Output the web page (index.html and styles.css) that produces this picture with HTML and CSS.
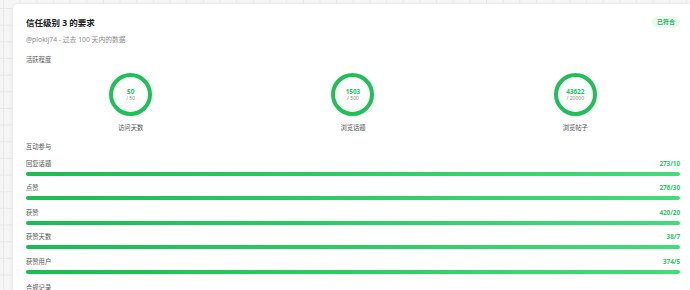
FILE: index.html
```html
<!DOCTYPE html>
<html lang="zh-CN">
<head>
  <meta charset="UTF-8" />
  <meta name="viewport" content="width=device-width, initial-scale=1.0"/>
  <title>信任级别 3 的要求</title>
  <link rel="stylesheet" href="styles.css">
</head>
<body>

  <div class="card">
    <div class="card-head">
      <h2 class="title">信任级别 3 的要求</h2>
      <span class="badge">已符合</span>
    </div>
    <div class="subtitle">@plokij74 - 过去 100 天内的数据</div>

    <div class="section-label">活跃程度</div>
    <div class="rings">
      <div class="ring-item">
        <div class="ring">
          <span class="ring-value">50</span>
          <span class="ring-goal">/ 50</span>
        </div>
        <div class="ring-label">访问天数</div>
      </div>
      <div class="ring-item">
        <div class="ring">
          <span class="ring-value">1503</span>
          <span class="ring-goal">/ 500</span>
        </div>
        <div class="ring-label">浏览话题</div>
      </div>
      <div class="ring-item">
        <div class="ring">
          <span class="ring-value">43622</span>
          <span class="ring-goal">/ 20000</span>
        </div>
        <div class="ring-label">浏览帖子</div>
      </div>
    </div>

    <div class="section-label gap-top">互动参与</div>
    <div class="rows">
      <div class="row">
        <div class="row-text"><span>回复话题</span><span class="row-value">273/10</span></div>
        <div class="bar"><div class="bar-fill" style="width: 100%"></div></div>
      </div>
      <div class="row">
        <div class="row-text"><span>点赞</span><span class="row-value">276/30</span></div>
        <div class="bar"><div class="bar-fill" style="width: 100%"></div></div>
      </div>
      <div class="row">
        <div class="row-text"><span>获赞</span><span class="row-value">420/20</span></div>
        <div class="bar"><div class="bar-fill" style="width: 100%"></div></div>
      </div>
      <div class="row">
        <div class="row-text"><span>获赞天数</span><span class="row-value">38/7</span></div>
        <div class="bar"><div class="bar-fill" style="width: 100%"></div></div>
      </div>
      <div class="row">
        <div class="row-text"><span>获赞用户</span><span class="row-value">374/5</span></div>
        <div class="bar"><div class="bar-fill" style="width: 100%"></div></div>
      </div>
    </div>

    <div class="section-label gap-top">合规记录</div>
  </div>

</body>
</html>
```

FILE: styles.css
```css
html, body {
  overflow: hidden;
}

body {
  margin: 0;
  padding: 4px 0 0 13px;
  font-family: "Noto Sans", "Noto Sans CJK SC", sans-serif;
  background-color: #f5f5f5;
  background-image:
    linear-gradient(to right, #e8e8e8 1px, transparent 1px),
    linear-gradient(to bottom, #e8e8e8 1px, transparent 1px);
  background-size: 16.67px 16.67px;
  background-position: 3px 8px;
}

.card {
  width: 654px;
  padding: 13px 13px 20px;
  background: #ffffff;
  border: 1px solid #ececec;
  border-radius: 6px;
  box-shadow: 0 1px 4px rgba(0, 0, 0, 0.05);
  box-sizing: content-box;
  margin-left: -1px;
  margin-top: -1px;
}

.card-head {
  display: flex;
  justify-content: space-between;
  align-items: center;
  height: 12px;
}

.title {
  margin: 0;
  font-size: 8.5px;
  line-height: 12px;
  font-weight: 700;
  color: #1a1a1a;
}

.badge {
  display: inline-block;
  height: 12px;
  line-height: 12px;
  padding: 0 5px;
  border-radius: 6px;
  background: #eafaf0;
  color: #22b35a;
  font-size: 6px;
  font-weight: 700;
  margin-top: -2px;
}

.subtitle {
  margin-top: 6px;
  font-size: 6.8px;
  line-height: 10px;
  color: #8c8c8c;
}

.section-label {
  margin-top: 10px;
  font-size: 6.3px;
  line-height: 10px;
  color: #555;
}

.gap-top {
  margin-top: 9px;
}

.rings {
  display: grid;
  grid-template-columns: repeat(3, 1fr);
  column-gap: 13px;
  margin-top: 8px;
}

.ring-item {
  display: flex;
  flex-direction: column;
  align-items: center;
}

.ring {
  width: 35px;
  height: 35px;
  border: 4px solid #1fc057;
  border-radius: 50%;
  display: flex;
  flex-direction: column;
  align-items: center;
  justify-content: center;
}

.ring-value {
  font-size: 6.3px;
  line-height: 7px;
  font-weight: 700;
  color: #22c35e;
}

.ring-goal {
  font-size: 5px;
  line-height: 6px;
  color: #888;
}

.ring-label {
  margin-top: 6.5px;
  font-size: 6.3px;
  line-height: 10px;
  color: #555;
}

.rows {
  margin-top: 7.5px;
  display: flex;
  flex-direction: column;
  gap: 7.4px;
}

.row-text {
  display: flex;
  justify-content: space-between;
  font-size: 6.3px;
  line-height: 10px;
  color: #555;
}

.row-value {
  color: #2bc766;
  font-weight: 700;
}

.bar {
  margin-top: 3px;
  height: 4px;
  border-radius: 2px;
  background: #dff7e8;
}

.bar-fill {
  height: 100%;
  border-radius: 2px;
  background: linear-gradient(to right, #19bd51 0%, #42dc7a 100%);
}
```
